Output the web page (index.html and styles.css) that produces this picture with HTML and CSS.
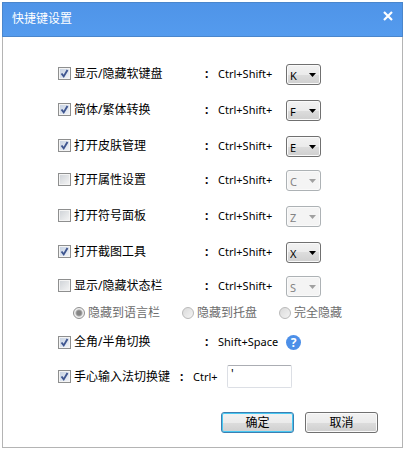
FILE: index.html
```html
<!DOCTYPE html>
<html lang="zh-CN">

<head>
    <meta charset="UTF-8">
    <meta name="viewport" content="width=device-width, initial-scale=1.0">
    <title>快捷键设置</title>
    <link rel="stylesheet" href="styles.css">
</head>

<body>
    <form class="dialog">
        <header class="titlebar">
            <h1>快捷键设置</h1>
            <button type="button" class="close" aria-label="关闭">
                <svg width="10" height="10" viewBox="0 0 10 10"><path d="M1 1L9 9M9 1L1 9" stroke="#fff" stroke-width="2.2"/></svg>
            </button>
        </header>
        <main class="content">
            <div class="row">
                <label class="option"><input type="checkbox" checked>显示/隐藏软键盘</label>
                <b>:</b>
                <label for="key-k">Ctrl+Shift+</label>
                <select id="key-k"><option>K</option></select>
            </div>
            <div class="row">
                <label class="option"><input type="checkbox" checked>简体/繁体转换</label>
                <b>:</b>
                <label for="key-f">Ctrl+Shift+</label>
                <select id="key-f"><option>F</option></select>
            </div>
            <div class="row">
                <label class="option"><input type="checkbox" checked>打开皮肤管理</label>
                <b>:</b>
                <label for="key-e">Ctrl+Shift+</label>
                <select id="key-e"><option>E</option></select>
            </div>
            <div class="row tight">
                <label class="option"><input type="checkbox">打开属性设置</label>
                <b>:</b>
                <label for="key-c">Ctrl+Shift+</label>
                <select id="key-c" disabled><option>C</option></select>
            </div>
            <div class="row">
                <label class="option"><input type="checkbox">打开符号面板</label>
                <b>:</b>
                <label for="key-z">Ctrl+Shift+</label>
                <select id="key-z" disabled><option>Z</option></select>
            </div>
            <div class="row">
                <label class="option"><input type="checkbox" checked>打开截图工具</label>
                <b>:</b>
                <label for="key-x">Ctrl+Shift+</label>
                <select id="key-x"><option>X</option></select>
            </div>
            <div class="row tight">
                <label class="option"><input type="checkbox">显示/隐藏状态栏</label>
                <b>:</b>
                <label for="key-s">Ctrl+Shift+</label>
                <select id="key-s" disabled><option>S</option></select>
            </div>
            <div class="radios">
                <label class="option"><input type="radio" name="hide" checked disabled>隐藏到语言栏</label>
                <label class="option"><input type="radio" name="hide" disabled>隐藏到托盘</label>
                <label class="option"><input type="radio" name="hide" disabled>完全隐藏</label>
            </div>
            <div class="row after-radios">
                <label class="option"><input type="checkbox" checked>全角/半角切换</label>
                <b>:</b>
                <span>Shift+Space</span>
                <button type="button" class="help" aria-label="帮助">?</button>
            </div>
            <div class="row tight ime">
                <label class="option"><input type="checkbox" checked>手心输入法切换键</label>
                <b>:</b>
                <label for="ime-key">Ctrl+</label>
                <input type="text" id="ime-key" value="'">
            </div>
        </main>
        <footer class="buttons">
            <button type="submit" class="btn primary">确定</button>
            <button type="button" class="btn">取消</button>
        </footer>
    </form>
</body>

</html>
```
FILE: styles.css
```css
* { box-sizing: border-box; }
body {
    margin: 0;
    padding: 2px 0 4px 2px;
    background: #fff;
    color: #000;
    font: 12px/16px "Noto Sans", "Noto Sans CJK SC", sans-serif;
}
button, input, select { margin: 0; font: inherit; color: inherit; }
.dialog {
    border: 1px solid #b4b4b4;
    border-top: 0;
    padding-bottom: 14px;
}
.titlebar {
    display: flex;
    justify-content: space-between;
    align-items: flex-start;
    height: 35px;
    margin: 0 -1px;
    padding: 8px 9px 0;
    background: linear-gradient(#4f94e8, #549bee);
    border: 1px solid #4a86cc;
    color: #fff;
}
h1 { margin: 0; font-size: 12px; font-weight: normal; }
.close {
    display: flex;
    padding: 0;
    border: 0;
    background: none;
}
.content { padding: 11px 0 0 55px; }
.row {
    display: grid;
    grid-template-columns: 147px 13px 68px auto;
    justify-content: start;
    align-items: center;
    height: 22px;
    margin-top: 14px;
}
.row.tight { margin-top: 12px; }
.row.after-radios { margin-top: 10px; }
.row.ime { grid-template-columns: 122px 13px 34px auto; }
.row label, .row span { font-size: 11px; }
.row .option, .option {
    display: flex;
    align-items: center;
    gap: 3px;
    font-size: 12px;
    white-space: nowrap;
}
input[type="checkbox"] {
    appearance: none;
    width: 13px;
    height: 13px;
    border: 1px solid #8e8f8f;
    background: linear-gradient(135deg, #cdd1d6, #f6f6f6);
    box-shadow: inset 0 0 0 1px #f4f4f4;
}
input[type="checkbox"]:checked {
    background: url("data:image/svg+xml,%3Csvg xmlns='http://www.w3.org/2000/svg' viewBox='0 0 11 11'%3E%3Cpath d='M2.5 5.5L4.7 8.4L8.5 2' fill='none' stroke='%233f5690' stroke-width='1.9'/%3E%3C/svg%3E"), linear-gradient(135deg, #c3cfe0, #f4f6fa);
}
select {
    appearance: none;
    width: 35px;
    height: 21px;
    padding: 2px 0 0 3px;
    border: 1px solid #707070;
    border-radius: 3px;
    background: url("data:image/svg+xml,%3Csvg xmlns='http://www.w3.org/2000/svg' width='7' height='4'%3E%3Cpath d='M0 0H7L3.5 4Z'/%3E%3C/svg%3E") no-repeat right 4px center, linear-gradient(#f2f2f2, #ebebeb 50%, #dddddd 50%, #cfcfcf);
    box-shadow: inset 0 0 0 1px #fafafa;
    font-size: 11px;
}
.row select { margin-top: 2px; }
select:disabled {
    border-color: #adb2b5;
    background: url("data:image/svg+xml,%3Csvg xmlns='http://www.w3.org/2000/svg' width='7' height='4'%3E%3Cpath d='M0 0H7L3.5 4Z' fill='%23a0a0a0'/%3E%3C/svg%3E") no-repeat right 4px center, #f4f4f4;
    color: #838383;
    opacity: 1;
}
.radios {
    display: flex;
    gap: 22px;
    margin: 9px 0 0 15px;
    color: #6d6d6d;
}
input[type="radio"] {
    appearance: none;
    width: 12px;
    height: 12px;
    border: 1px solid #b9b9b9;
    border-radius: 50%;
    background: linear-gradient(135deg, #dadada, #f4f4f4);
}
input[type="radio"]:checked {
    border-color: #909090;
    background: radial-gradient(#858585 0 2px, #a8a8a8 3px, #eeeeee 4px);
}
.help {
    width: 15px;
    height: 15px;
    padding: 0;
    border: 0;
    border-radius: 50%;
    background: #4c8fe8;
    color: #fff;
    font-weight: bold;
    line-height: 15px;
}
input[type="text"] {
    width: 65px;
    height: 23px;
    padding: 0 3px 6px;
    border: 1px solid #dcdfe5;
    border-top-color: #abadb3;
    border-radius: 2px;
    background: #fff;
}
.buttons {
    display: flex;
    justify-content: flex-end;
    gap: 11px;
    padding: 25px 24px 0 0;
}
.btn {
    width: 73px;
    height: 21px;
    padding: 0;
    border: 1px solid #707070;
    border-radius: 3px;
    background: linear-gradient(#f2f2f2, #ebebeb 50%, #dddddd 50%, #cfcfcf);
    box-shadow: inset 0 0 0 1px #fafafa;
    line-height: 16px;
}
.btn.primary {
    border-color: #3c7fb1;
    box-shadow: inset 0 0 0 1px #48c8f2;
}
```
